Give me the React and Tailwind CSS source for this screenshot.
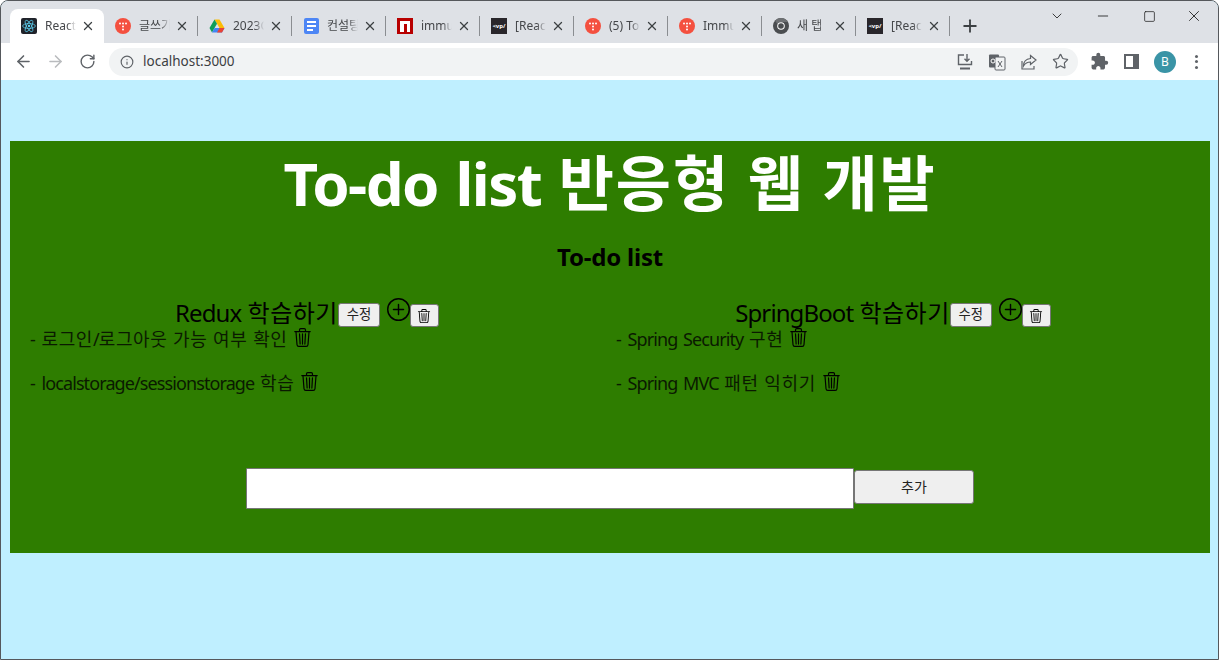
import { ArrowLeft, ArrowRight, RotateCw, Info, Star, Plus, X, Minus, ChevronDown, Square } from "lucide-react";
import { BsTrash3, BsPlusCircle } from "react-icons/bs";
import { MdExtension } from "react-icons/md";

const ReactIcon = () => (
  <div className="w-4 h-4 rounded-[2px] bg-[#20232a] flex items-center justify-center">
    <svg width="14" height="14" viewBox="-12 -12 24 24" fill="none" stroke="#61dafb" strokeWidth="1.2">
      <circle r="2" fill="#61dafb" stroke="none" />
      <ellipse rx="11" ry="4.2" />
      <ellipse rx="11" ry="4.2" transform="rotate(60)" />
      <ellipse rx="11" ry="4.2" transform="rotate(120)" />
    </svg>
  </div>
);

const TistoryIcon = () => (
  <svg width="16" height="16" viewBox="0 0 16 16">
    <circle cx="8" cy="8" r="8" fill="#f4503f" />
    <g fill="#fff">
      <circle cx="5" cy="5.5" r="1" />
      <circle cx="8" cy="5.5" r="1" />
      <circle cx="11" cy="5.5" r="1" />
      <circle cx="8" cy="8.5" r="1" />
      <circle cx="8" cy="11.5" r="1" />
    </g>
  </svg>
);

const DriveIcon = () => (
  <svg width="16" height="16" viewBox="0 0 16 16">
    <path d="M10.5 1.5 15.5 10h-5L5.5 1.5z" fill="#fbbc04" />
    <path d="M5.5 1.5 8 5.8 3 14.5.5 10z" fill="#0f9d58" />
    <path d="M5.6 10h9.9L13 14.5H3z" fill="#4285f4" />
    <path d="M10.5 10h5L13 14.5H8z" fill="#ea4335" />
  </svg>
);

const DocsIcon = () => (
  <div className="w-[15px] h-4 rounded-[2px] bg-[#4d86f5] flex flex-col justify-center gap-[2px] px-[3px]">
    <div className="h-[2px] bg-white" />
    <div className="h-[2px] bg-white" />
    <div className="h-[2px] w-[6px] bg-white" />
  </div>
);

const NpmIcon = () => (
  <div className="w-4 h-4 bg-[#b80000] flex items-end justify-center pb-[2px]">
    <div className="w-[10px] h-[11px] bg-white flex items-end justify-center">
      <div className="w-[3px] h-[8px] bg-[#b80000] ml-[1px]" />
    </div>
  </div>
);

const VelopertIcon = () => (
  <div className="w-4 h-4 bg-[#29262b] flex items-center justify-center text-[6px] leading-none text-white font-bold overflow-hidden">
    &lt;vp/
  </div>
);

const ChromeIcon = () => (
  <svg width="16" height="16" viewBox="0 0 16 16">
    <circle cx="8" cy="8" r="8" fill="#4a4d50" />
    <path d="M8 0a8 8 0 0 1 7 4H8a4 4 0 0 0-3.6 2.2L2 2.6A8 8 0 0 1 8 0z" fill="#6d7073" />
    <circle cx="8" cy="8" r="3.8" fill="#fff" />
    <circle cx="8" cy="8" r="2.8" fill="#4a4d50" />
  </svg>
);

const tabs = [
  { icon: <ReactIcon />, title: "React", active: true },
  { icon: <TistoryIcon />, title: "글쓰기" },
  { icon: <DriveIcon />, title: "2023C" },
  { icon: <DocsIcon />, title: "컨설팅" },
  { icon: <NpmIcon />, title: "immu" },
  { icon: <VelopertIcon />, title: "[React" },
  { icon: <TistoryIcon />, title: "(5) To" },
  { icon: <TistoryIcon />, title: "Immu" },
  { icon: <ChromeIcon />, title: "새 탭" },
  { icon: <VelopertIcon />, title: "[React" },
];

// hangul and latin runs need different spacing to land on the reference's widths
const Mixed = ({ text, latin, hangul }) =>
  text.split(/([가-힣]+|\s+)/).filter(Boolean).map((part, i) => {
    if (/^\s+$/.test(part)) return part;
    return (
      <span key={i} className={/[가-힣]/.test(part) ? hangul : latin}>
        {part}
      </span>
    );
  });

const Tab = ({ tab, hideLine }) => (
  <div
    className={`relative w-[94px] h-[34px] flex items-center pl-[11px] shrink-0 ${
      tab.active ? "bg-white rounded-t-[8px]" : ""
    }`}
  >
    <div className="w-4 h-4 flex items-center justify-center shrink-0">{tab.icon}</div>
    <span className="ml-2 w-[31px] overflow-hidden whitespace-nowrap text-xs text-[#45474a] [mask-image:linear-gradient(to_right,black_70%,transparent)]">
      {tab.title}
    </span>
    <X size={14} strokeWidth={2.2} className="ml-[5px] text-[#3c4043] shrink-0" />
    {!hideLine && <div className="absolute right-0 top-[7px] h-[20px] w-px bg-[#8a8d91]" />}
  </div>
);

const TrashButton = () => (
  <button className="mt-[6px] w-[29px] h-[23px] flex items-center justify-center bg-[#efefef] border border-[#767676] rounded-[3px] text-black">
    <BsTrash3 size={14} />
  </button>
);

const TodoColumn = ({ title, items }) => (
  <div className="w-[586px] shrink-0">
    <div className="flex justify-center items-start h-[29px]">
      <span className="text-2xl leading-[30px] text-black whitespace-pre">
        <Mixed text={title} latin="tracking-[-0.9px]" hangul="tracking-[0.5px]" />
      </span>
      <button className="mt-[5px] w-[42px] h-[24px] bg-[#efefef] border border-[#767676] rounded-[3px] text-[13.33px] leading-none text-[#222]">
        수정
      </button>
      <BsPlusCircle size={23} className="ml-[7px] text-black" />
      <TrashButton />
    </div>
    <ul className="pl-4">
      {items.map((item) => (
        <li key={item} className="h-[44px] flex items-start text-[#0a1a00] text-lg">
          <span className="leading-[24px] whitespace-pre [word-spacing:1px]">
            - <Mixed text={item} latin="tracking-[-0.9px]" hangul="tracking-[0.6px]" />
          </span>
          <BsTrash3 size={19} className="ml-[6px] mt-[1px] text-black" />
        </li>
      ))}
    </ul>
  </div>
);

export default function App() {
  return (
    <div className="w-[1219px] h-[660px] overflow-hidden flex flex-col border border-[#55585c] rounded-t-[8px] bg-[#bfefff] font-['Noto_Sans','Noto_Sans_CJK_KR',sans-serif]">
      {/* tab strip */}
      <div className="h-[42px] bg-[#dee1e6] flex items-end pl-[9px] shrink-0">
        {tabs.map((tab, i) => (
          <Tab key={i} tab={tab} hideLine={i === 0} />
        ))}
        <Plus size={20} strokeWidth={2.2} className="ml-[10px] mb-[7px] text-[#3c4043]" />
        <div className="ml-auto self-start flex items-center h-[30px] pr-[15px] text-[#222]">
          <ChevronDown size={16} strokeWidth={1.3} />
          <Minus size={16} strokeWidth={1.3} className="ml-[30px]" />
          <Square size={13} strokeWidth={1.4} className="ml-[32px]" />
          <X size={18} strokeWidth={1.2} className="ml-[29px]" />
        </div>
      </div>

      {/* toolbar */}
      <div className="h-[37px] bg-white flex items-center shrink-0 text-[#5f6368]">
        <ArrowLeft size={19} className="ml-[13px]" />
        <ArrowRight size={19} className="ml-[13px] text-[#b9bbbe]" />
        <RotateCw size={17} className="ml-[14px]" />
        <div className="ml-[13px] w-[969px] h-[28px] rounded-full bg-[#f1f3f4] flex items-center">
          <Info size={14} className="ml-[11px]" />
          <span className="ml-[9px] text-[13.5px] text-[#3c4043]">localhost:3000</span>
          <div className="ml-auto flex items-center gap-[14px] pr-[9px]">
            <svg width="18" height="18" viewBox="0 0 18 18" fill="none" stroke="currentColor" strokeWidth="1.4">
              <path d="M8 2H2.5v9.5h13V8" />
              <path d="M4 15.5h10" strokeWidth="2" />
              <path d="M11 1v7M8.5 5.8 11 8.3l2.5-2.5" />
            </svg>
            <svg width="18" height="18" viewBox="0 0 18 18">
              <rect x="1" y="1.5" width="10" height="13" rx="1" fill="currentColor" />
              <rect x="7" y="4" width="10" height="13" rx="1" fill="#f1f3f4" stroke="currentColor" />
              <circle cx="5" cy="8" r="2" fill="none" stroke="#fff" />
              <path d="m10 8 4 6M14 8l-4 6" stroke="currentColor" />
            </svg>
            <svg width="18" height="18" viewBox="0 0 18 18" fill="none" stroke="currentColor" strokeWidth="1.2">
              <path d="M10.5 2.5 16 7l-5.5 4.500V9C7 9 5 10.500 3.500 13c0-4 2.500-7 7-7.500z" />
              <path d="M2 8v8h12v-3" />
            </svg>
            <Star size={17} strokeWidth={1.7} />
          </div>
        </div>
        <MdExtension size={19} className="ml-[12px]" />
        <div className="ml-[15px] w-[15px] h-[15px] border-[2px] border-r-[6px] border-[#5f6368]" />
        <div className="ml-[15px] w-[22px] h-[22px] rounded-full bg-[#3a94a6] flex items-center justify-center text-xs text-white">
          B
        </div>
        <div className="ml-[19px] flex flex-col gap-[2.5px]">
          <div className="w-[3px] h-[3px] rounded-full bg-[#5f6368]" />
          <div className="w-[3px] h-[3px] rounded-full bg-[#5f6368]" />
          <div className="w-[3px] h-[3px] rounded-full bg-[#5f6368]" />
        </div>
      </div>

      {/* page */}
      <div className="flex-1 px-[9px] pt-[61px]">
        <div className="w-[1200px] h-[412px] bg-[#2e7d00]">
          <h1 className="text-[60px] leading-[84px] font-bold text-white text-center whitespace-pre [word-spacing:2px]">
            <Mixed text="To-do list 반응형 웹 개발" latin="tracking-[-1.6px]" hangul="tracking-[1.9px]" />
          </h1>
          <h2 className="mt-4 text-2xl leading-8 font-bold text-black text-center tracking-[-0.2px]">To-do list</h2>
          <div className="mt-[25px] pl-1 flex">
            <TodoColumn title="Redux 학습하기" items={["로그인/로그아웃 가능 여부 확인", "localstorage/sessionstorage 학습"]} />
            <TodoColumn title="SpringBoot 학습하기" items={["Spring Security 구현", "Spring MVC 패턴 익히기"]} />
          </div>
          <div className="mt-[53px] flex justify-center items-start">
            <input className="w-[608px] h-[41px] bg-white border border-[#767676] rounded-[1px]" />
            <button className="mt-[2px] w-[120px] h-[34px] bg-[#efefef] border border-[#767676] rounded-[3px] text-sm text-[#222]">
              추가
            </button>
          </div>
        </div>
      </div>
    </div>
  );
}
